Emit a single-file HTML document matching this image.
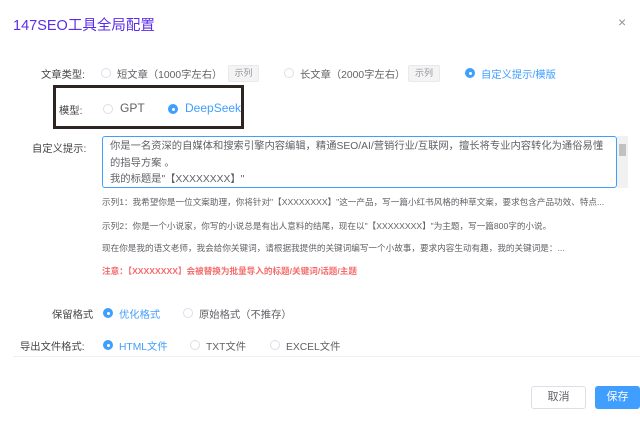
<!DOCTYPE html>
<html><head><meta charset="utf-8"><style>
body{margin:0;width:640px;height:422px;background:#fff;font-family:"Liberation Sans","Noto Sans CJK SC",sans-serif;position:relative;overflow:hidden}
.a{position:absolute;white-space:nowrap}
.t{font-size:10.3px;color:#606266}
.b{color:#409eff}
.r{position:absolute;width:10px;height:10px;border:1px solid #dcdfe6;border-radius:50%;box-sizing:border-box;background:#fff}
.r.on{background:#409eff;border-color:#409eff}
.r.on::after{content:"";position:absolute;left:3px;top:3px;width:3px;height:3px;border-radius:50%;background:#fff}
.btn{position:absolute;background:#f4f4f5;border:1px solid #e9e9eb;color:#909399;font-size:9px;text-align:center;box-sizing:border-box;border-radius:2px}
.ex{font-size:8.6px;color:#606266}
</style></head><body>
<div class="a" style="left:13px;top:14px;font-size:14.5px;color:#5b2de8">147SEO工具全局配置</div>
<div class="a" style="left:618px;top:14px;font-size:14px;color:#909399">×</div>

<div class="a t" style="left:41px;top:66px;color:#444">文章类型:</div>
<div class="r" style="left:101px;top:68px"></div><div class="a t" style="left:117px;top:66px">短文章（1000字左右）</div>
<div class="btn" style="left:228px;top:65px;width:31px;height:17px;line-height:15px">示列</div>
<div class="r" style="left:284px;top:68px"></div><div class="a t" style="left:300px;top:66px">长文章（2000字左右）</div>
<div class="btn" style="left:408px;top:65px;width:32px;height:17px;line-height:15px">示列</div>
<div class="r on" style="left:465px;top:68px"></div><div class="a t b" style="left:481px;top:66px">自定义提示/模版</div>

<div class="a" style="left:53px;top:85px;width:191px;height:44px;border:3px solid #2e2523;box-sizing:border-box"></div>
<div class="a t" style="left:59px;top:102px;color:#444">模型:</div>
<div class="r" style="left:103px;top:104px"></div><div class="a t" style="left:120px;top:101px;font-size:12px">GPT</div>
<div class="r on" style="left:168px;top:104px"></div><div class="a t b" style="left:185px;top:101px;font-size:12px">DeepSeek</div>

<div class="a t" style="left:32px;top:140px;color:#444">自定义提示:</div>
<div class="a" style="left:102px;top:136px;width:515px;height:52px;border:1px solid #409eff;border-radius:3px;box-sizing:border-box"></div>
<div class="a" style="left:617px;top:136px;width:11px;height:52px;background:#f1f1f1"><div style="margin:8px 2px 0;height:12px;background:#c1c1c1"></div></div>
<div class="a" style="left:110px;top:139px;font-size:10.3px;color:#606266;line-height:16.5px;white-space:normal;width:500px">你是一名资深的自媒体和搜索引擎内容编辑，精通SEO/AI/营销行业/互联网，擅长将专业内容转化为通俗易懂的指导方案 。<br>我的标题是"【XXXXXXXX】"</div>

<div class="a ex" style="left:102px;top:196px">示列1：我希望你是一位文案助理，你将针对"【XXXXXXXX】"这一产品，写一篇小红书风格的种草文案，要求包含产品功效、特点...</div>
<div class="a ex" style="left:102px;top:220px">示列2：你是一个小说家，你写的小说总是有出人意料的结尾，现在以"【XXXXXXXX】"为主题，写一篇800字的小说。</div>
<div class="a ex" style="left:102px;top:242px">现在你是我的语文老师，我会给你关键词，请根据我提供的关键词编写一个小故事，要求内容生动有趣，我的关键词是：...</div>
<div class="a ex" style="left:102px;top:265px;color:#f56c6c;font-weight:bold">注意：【XXXXXXXX】会被替换为批量导入的标题/关键词/话题/主题</div>

<div class="a t" style="left:52px;top:306px;color:#444">保留格式</div>
<div class="r on" style="left:103px;top:308px"></div><div class="a t b" style="left:119px;top:306px">优化格式</div>
<div class="r" style="left:183px;top:308px"></div><div class="a t" style="left:199px;top:306px">原始格式（不推存）</div>

<div class="a t" style="left:20px;top:338px;color:#444">导出文件格式:</div>
<div class="r on" style="left:103px;top:340px"></div><div class="a t b" style="left:119px;top:338px">HTML文件</div>
<div class="r" style="left:190px;top:340px"></div><div class="a t" style="left:206px;top:338px">TXT文件</div>
<div class="r" style="left:270px;top:340px"></div><div class="a t" style="left:286px;top:338px">EXCEL文件</div>
<div class="a" style="left:13px;top:356px;width:627px;height:1px;background:#f0f0f0"></div>

<div class="a" style="left:531px;top:386px;width:55px;height:23px;border:1px solid #dcdfe6;border-radius:3px;box-sizing:border-box;font-size:11px;color:#606266;text-align:center;line-height:21px">取消</div>
<div class="a" style="left:595px;top:386px;width:45px;height:23px;background:#409eff;border-radius:3px;font-size:11px;color:#fff;text-align:center;line-height:23px">保存</div>
</body></html>
